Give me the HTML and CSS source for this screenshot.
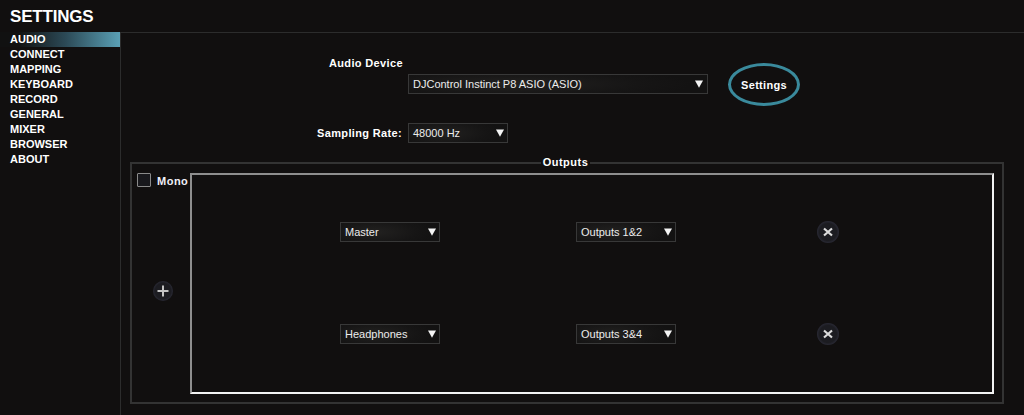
FILE: index.html
```html
<!DOCTYPE html>
<html>
<head>
<meta charset="utf-8">
<link rel="stylesheet" href="styles.css">
</head>
<body>
<div class="app">
  <header class="title">SETTINGS</header>
  <div class="main">
    <nav class="sidebar">
      <div class="nav-item active">AUDIO</div>
      <div class="nav-item">CONNECT</div>
      <div class="nav-item">MAPPING</div>
      <div class="nav-item">KEYBOARD</div>
      <div class="nav-item">RECORD</div>
      <div class="nav-item">GENERAL</div>
      <div class="nav-item">MIXER</div>
      <div class="nav-item">BROWSER</div>
      <div class="nav-item">ABOUT</div>
    </nav>
    <section class="content">
      <div class="device-label">Audio Device</div>
      <div class="device-row">
        <div class="select select-wide">
          <span>DJControl Instinct P8 ASIO (ASIO)</span>
          <svg class="arrow" width="8" height="8" viewBox="0 0 8 8"><polygon points="0,0.5 8,0.5 4,7.8" fill="#f4f4f4"/></svg>
        </div>
        <button class="settings-btn">Settings</button>
      </div>
      <div class="rate-row">
        <span class="rate-label">Sampling Rate:</span>
        <div class="select select-small">
          <span>48000 Hz</span>
          <svg class="arrow" width="8" height="8" viewBox="0 0 8 8"><polygon points="0,0.5 8,0.5 4,7.8" fill="#f4f4f4"/></svg>
        </div>
      </div>
      <fieldset class="outputs">
        <legend class="outputs-legend">Outputs</legend>
        <div class="outputs-body">
          <div class="side-col">
            <div class="mono">
              <span class="checkbox"></span>
              <span class="mono-text">Mono</span>
            </div>
            <button class="round-btn add-btn">
              <svg width="20" height="20" viewBox="0 0 20 20"><path d="M10 4.5 V15.5 M4.5 10 H15.5" stroke="#c4c4c4" stroke-width="2" fill="none"/></svg>
            </button>
          </div>
          <div class="routing">
            <div class="route-row">
              <div class="select select-small">
                <span>Master</span>
                <svg class="arrow" width="8" height="8" viewBox="0 0 8 8"><polygon points="0,0.5 8,0.5 4,7.8" fill="#f4f4f4"/></svg>
              </div>
              <div class="select select-small out-select">
                <span>Outputs 1&amp;2</span>
                <svg class="arrow" width="8" height="8" viewBox="0 0 8 8"><polygon points="0,0.5 8,0.5 4,7.8" fill="#f4f4f4"/></svg>
              </div>
              <button class="round-btn del-btn">
                <svg width="22" height="22" viewBox="0 0 22 22"><path d="M7 7.5 L15 14.5 M15 7.5 L7 14.5" stroke="#dcdcdc" stroke-width="2.2" fill="none"/></svg>
              </button>
            </div>
            <div class="route-row">
              <div class="select select-small">
                <span>Headphones</span>
                <svg class="arrow" width="8" height="8" viewBox="0 0 8 8"><polygon points="0,0.5 8,0.5 4,7.8" fill="#f4f4f4"/></svg>
              </div>
              <div class="select select-small out-select">
                <span>Outputs 3&amp;4</span>
                <svg class="arrow" width="8" height="8" viewBox="0 0 8 8"><polygon points="0,0.5 8,0.5 4,7.8" fill="#f4f4f4"/></svg>
              </div>
              <button class="round-btn del-btn">
                <svg width="22" height="22" viewBox="0 0 22 22"><path d="M7 7.5 L15 14.5 M15 7.5 L7 14.5" stroke="#dcdcdc" stroke-width="2.2" fill="none"/></svg>
              </button>
            </div>
          </div>
        </div>
      </fieldset>
    </section>
  </div>
</div>
</body>
</html>
```
FILE: styles.css
```css
html, body {
  margin: 0;
  padding: 0;
  background: #110f0f;
}
body {
  font-family: "Liberation Sans", Arial, sans-serif;
  font-size: 11px;
  color: #ffffff;
  width: 1024px;
  height: 415px;
  overflow: hidden;
}
.app {
  display: flex;
  flex-direction: column;
  height: 415px;
}
.title {
  height: 32px;
  box-sizing: border-box;
  padding: 7px 0 0 10px;
  font-size: 17px;
  line-height: 20px;
  font-weight: bold;
  letter-spacing: -0.2px;
}
.main {
  display: flex;
  flex: 1;
}
.sidebar {
  width: 120px;
  flex: none;
}
.nav-item {
  height: 15px;
  line-height: 15px;
  padding-left: 10px;
  font-weight: bold;
  font-size: 11px;
}
.nav-item.active {
  background: linear-gradient(90deg, #111111 15%, #2c4a57 55%, #5aa0b5 100%);
}
.content {
  flex: 1;
  border-left: 1px solid #2c2c2c;
  border-top: 1px solid #2c2c2c;
}
.device-label {
  margin: 23px 0 0 208px;
  line-height: 15px;
  font-weight: bold;
  letter-spacing: 0.35px;
}
.device-row {
  display: flex;
  align-items: center;
  margin-top: 3px;
  padding-left: 287px;
}
.select {
  display: flex;
  align-items: center;
  justify-content: space-between;
  height: 20px;
  box-sizing: border-box;
  border: 1px solid #383838;
  padding: 0 3px 0 4px;
  line-height: 18px;
  color: #ececec;
  background: radial-gradient(ellipse 60% 90% at 35% 50%, #222120 0%, #161515 70%, #131212 100%);
  white-space: nowrap;
}
.select-wide {
  width: 300px;
  padding-right: 4px;
}
.select-small {
  width: 100px;
}
.arrow {
  flex: none;
}
.settings-btn {
  width: 72px;
  height: 43px;
  margin: -11px 0 -12px 20px;
  border: 3px solid #3a8a9c;
  border-radius: 50%;
  background: #110f0f;
  color: #ffffff;
  font-family: inherit;
  font-size: 11px;
  font-weight: bold;
  letter-spacing: 0.3px;
  padding: 0;
}
.rate-row {
  display: flex;
  align-items: center;
  gap: 6px;
  margin-top: 29px;
}
.rate-label {
  width: 281px;
  text-align: right;
  font-weight: bold;
  line-height: 15px;
  letter-spacing: 0.35px;
}
.outputs {
  margin: 13px 20px 0 9px;
  padding: 4px 8px 8px 5px;
  border: 2px solid #333333;
  min-width: 0;
}
.outputs-legend {
  margin: 0 auto;
  padding: 0 2px;
  font-weight: bold;
  line-height: 13px;
  letter-spacing: 0.5px;
}
.outputs-body {
  display: flex;
}
.side-col {
  width: 53px;
  flex: none;
  display: flex;
  flex-direction: column;
  align-items: flex-start;
}
.mono {
  display: flex;
  align-items: center;
  gap: 6px;
  height: 14px;
}
.checkbox {
  width: 14px;
  height: 14px;
  box-sizing: border-box;
  border: 1px solid #8a8a8a;
  border-radius: 1px;
  background: #18181c;
}
.mono-text {
  font-weight: bold;
  line-height: 15px;
  padding-top: 2px;
  color: #f0f0f8;
  letter-spacing: 0.5px;
}
.round-btn {
  padding: 0;
  border: none;
  border-radius: 50%;
  background: radial-gradient(circle, #1c1c21 0%, #1c1c21 55%, #2a2a36 72%, rgba(36, 36, 48, 0.5) 88%, rgba(20, 20, 24, 0) 100%);
  display: flex;
  align-items: center;
  justify-content: center;
}
.add-btn {
  width: 20px;
  height: 20px;
  margin: 94px 0 0 16px;
}
.routing {
  width: 804px;
  height: 221px;
  box-sizing: border-box;
  border: 2px solid;
  border-color: #8e8e8e #f2f2f2 #f2f2f2 #8e8e8e;
  padding-top: 46px;
  display: flex;
  flex-direction: column;
  gap: 80px;
}
.route-row {
  display: flex;
  align-items: center;
  padding-left: 148px;
}
.out-select {
  margin-left: 136px;
}
.del-btn {
  width: 22px;
  height: 22px;
  margin-left: 141px;
}
```
